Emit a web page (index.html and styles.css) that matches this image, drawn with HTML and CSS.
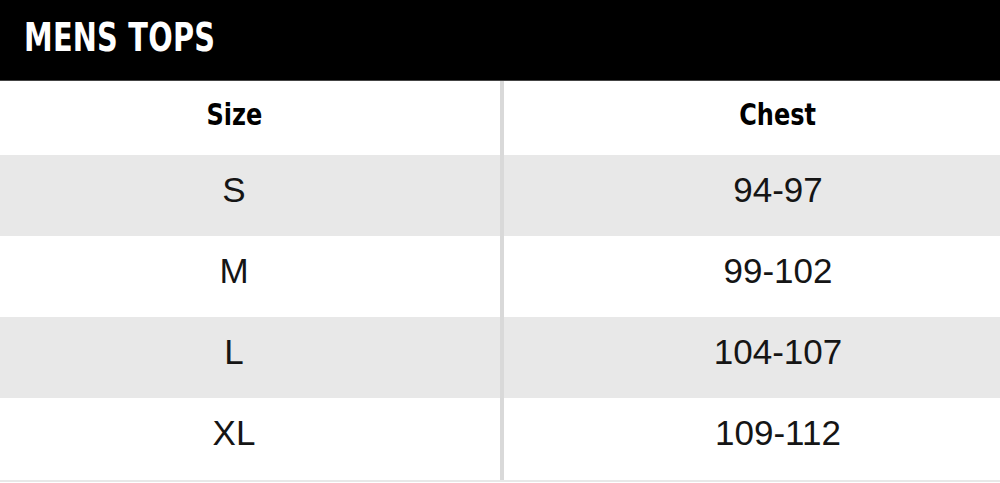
FILE: index.html
```html
<!DOCTYPE html>
<html>
<head>
<meta charset="utf-8">
<link rel="stylesheet" href="styles.css">
</head>
<body>
<div class="chart">
  <div class="title"><span class="cond">MENS TOPS</span></div>
  <div class="table">
    <div class="row head">
      <div class="cell left"><span class="cond">Size</span></div>
      <div class="cell right"><span class="cond">Chest</span></div>
    </div>
    <div class="row shaded">
      <div class="cell left">S</div>
      <div class="cell right">94-97</div>
    </div>
    <div class="row">
      <div class="cell left">M</div>
      <div class="cell right">99-102</div>
    </div>
    <div class="row shaded">
      <div class="cell left">L</div>
      <div class="cell right">104-107</div>
    </div>
    <div class="row last">
      <div class="cell left">XL</div>
      <div class="cell right">109-112</div>
    </div>
  </div>
</div>
</body>
</html>
```
FILE: styles.css
```css
html, body {
  margin: 0;
  padding: 0;
  background: #fff;
}
.chart {
  width: 1000px;
  height: 483px;
  overflow: hidden;
}
.cond {
  display: inline-block;
  transform: scaleX(0.82);
  transform-origin: center;
}
.title {
  height: 81px;
  background: #000;
  border-bottom: 1px solid #444;
  color: #fff;
  font-family: "DejaVu Sans Condensed", "Liberation Sans Narrow", sans-serif;
  font-weight: bold;
  font-size: 39px;
  line-height: 40px;
  padding: 18px 0 0 24px;
  box-sizing: border-box;
  letter-spacing: 0.3px;
}
.title .cond {
  transform-origin: left center;
}
.table {
  display: flex;
  flex-direction: column;
  border-bottom: 2px solid #e8e8e8;
}
.row {
  display: grid;
  grid-template-columns: 500px 500px;
  height: 81px;
}
.row.head {
  height: 74px;
}
.row.last {
  height: 82px;
}
.row.shaded {
  background: #e8e8e8;
}
.cell {
  font-family: "Liberation Sans", Arial, sans-serif;
  font-size: 35px;
  line-height: 40px;
  color: #151515;
  text-align: center;
  padding-top: 15px;
  box-sizing: border-box;
}
.cell.left {
  padding-right: 32px;
}
.cell.right {
  border-left: 4px solid #d9d9d9;
  padding-left: 52px;
}
.head .cell {
  font-family: "DejaVu Sans Condensed", "Liberation Sans Narrow", sans-serif;
  font-weight: bold;
  font-size: 31px;
  color: #000;
  padding-top: 13px;
}
.head .cond {
  transform: scaleX(0.86);
}
```
